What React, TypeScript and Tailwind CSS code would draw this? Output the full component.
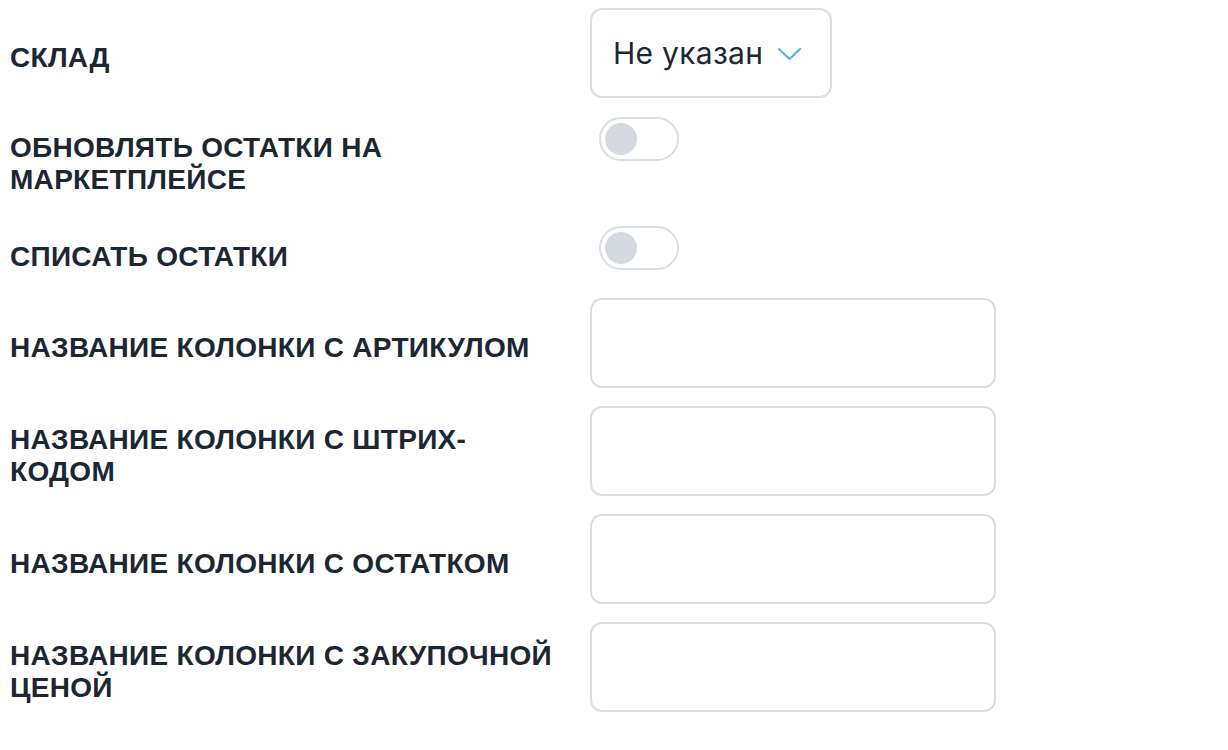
import React, { useState } from "react";

const labelCls =
  "w-[580px] shrink-0 pr-[22px] text-[28px] leading-[32px] font-bold uppercase tracking-[0.3px] text-[#1b2733]";

function Toggle({ on, onChange }: { on: boolean; onChange: (v: boolean) => void }) {
  return (
    <button
      type="button"
      onClick={() => onChange(!on)}
      className={`ml-[9px] flex h-[44px] w-[80px] shrink-0 items-center rounded-full border-2 border-[#d8dee2] bg-white p-[4px] ${
        on ? "justify-end" : "justify-start"
      }`}
    >
      <span className="block h-[32px] w-[32px] rounded-full bg-[#d4dadf]" />
    </button>
  );
}

function TextField() {
  return (
    <input
      type="text"
      className="h-[90px] w-[406px] rounded-[12px] border-2 border-[#d8dee2] bg-white px-5 text-[28px] text-[#1b2733] outline-none"
    />
  );
}

export default function App() {
  const [updateStock, setUpdateStock] = useState(false);
  const [writeOff, setWriteOff] = useState(false);

  const columns = [
    "Название колонки с артикулом",
    "Название колонки с штрих-кодом",
    "Название колонки с остатком",
    "Название колонки с закупочной ценой",
  ];

  return (
    <div className="min-h-screen bg-white px-[10px] pt-2 font-['Liberation_Sans',Arial,sans-serif]">
      {/* Склад */}
      <div className="flex h-[90px] items-center">
        <div className={`${labelCls} pt-[10px]`}>Склад</div>
        <button
          type="button"
          className="flex h-[90px] w-[242px] items-center gap-[15px] rounded-[12px] border-2 border-[#d8dee2] bg-white pl-[21px] font-['Inter',sans-serif] text-[30px] tracking-[0.3px] text-[#1b2733]"
        >
          <span>Не указан</span>
          <svg width="23" height="12" viewBox="0 0 23 12" fill="none" className="mt-[1px]">
            <path d="M1 1l10.5 10L22 1" stroke="#5aace4" strokeWidth="2" strokeLinecap="round" strokeLinejoin="round" />
          </svg>
        </button>
      </div>

      {/* toggles */}
      <div className="mt-[19px] flex items-start">
        <div className={`${labelCls} pt-[15px]`}>Обновлять остатки на маркетплейсе</div>
        <Toggle on={updateStock} onChange={setUpdateStock} />
      </div>
      <div className="mt-[30px] flex items-start">
        <div className={`${labelCls} pt-[15px]`}>Списать остатки</div>
        <Toggle on={writeOff} onChange={setWriteOff} />
      </div>

      {/* column names */}
      <div className="mt-[25px] flex flex-col gap-[18px]">
        {columns.map((c) => (
          <div key={c} className="flex items-center">
            <div className={`${labelCls} pt-[10px]`}>{c}</div>
            <TextField />
          </div>
        ))}
      </div>
    </div>
  );
}
